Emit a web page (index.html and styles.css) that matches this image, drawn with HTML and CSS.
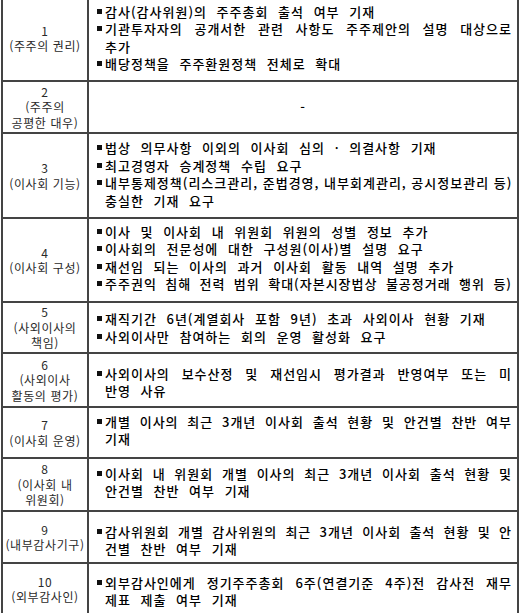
FILE: index.html
```html
<!DOCTYPE html>
<html lang="ko">
<head>
<meta charset="utf-8">
<link rel="stylesheet" href="styles.css">
</head>
<body>
<table class="grid">
  <colgroup><col class="c-label"><col class="c-body"></colgroup>
  <tr class="r1">
    <td class="label"><div>1</div><div>(주주의 권리)</div></td>
    <td class="body">
      <div class="item"><span class="dot"></span><div class="txt">감사(감사위원)의 주주총회 출석 여부 기재</div></div>
      <div class="item"><span class="dot"></span><div class="txt"><span class="jl">기관투자자의 공개서한 관련 사항도 주주제안의 설명 대상으로</span>추가</div></div>
      <div class="item"><span class="dot"></span><div class="txt">배당정책을 주주환원정책 전체로 확대</div></div>
    </td>
  </tr>
  <tr class="r2">
    <td class="label"><div>2</div><div>(주주의</div><div>공평한 대우)</div></td>
    <td class="body dash">-</td>
  </tr>
  <tr class="r3">
    <td class="label"><div>3</div><div>(이사회 기능)</div></td>
    <td class="body">
      <div class="item"><span class="dot"></span><div class="txt">법상 의무사항 이외의 이사회 심의 · 의결사항 기재</div></div>
      <div class="item"><span class="dot"></span><div class="txt">최고경영자 승계정책 수립 요구</div></div>
      <div class="item"><span class="dot"></span><div class="txt"><span class="jl">내부통제정책(리스크관리, 준법경영, 내부회계관리, 공시정보관리 등)</span>충실한 기재 요구</div></div>
    </td>
  </tr>
  <tr class="r4">
    <td class="label"><div>4</div><div>(이사회 구성)</div></td>
    <td class="body">
      <div class="item"><span class="dot"></span><div class="txt">이사 및 이사회 내 위원회 위원의 성별 정보 추가</div></div>
      <div class="item"><span class="dot"></span><div class="txt">이사회의 전문성에 대한 구성원(이사)별 설명 요구</div></div>
      <div class="item"><span class="dot"></span><div class="txt">재선임 되는 이사의 과거 이사회 활동 내역 설명 추가</div></div>
      <div class="item"><span class="dot"></span><div class="txt"><span class="jl">주주권익 침해 전력 범위 확대(자본시장법상 불공정거래 행위 등)</span></div></div>
    </td>
  </tr>
  <tr class="r5">
    <td class="label"><div>5</div><div>(사외이사의</div><div>책임)</div></td>
    <td class="body">
      <div class="item"><span class="dot"></span><div class="txt">재직기간 6년(계열회사 포함 9년) 초과 사외이사 현황 기재</div></div>
      <div class="item"><span class="dot"></span><div class="txt">사외이사만 참여하는 회의 운영 활성화 요구</div></div>
    </td>
  </tr>
  <tr class="r6">
    <td class="label"><div>6</div><div>(사외이사</div><div>활동의 평가)</div></td>
    <td class="body">
      <div class="item"><span class="dot"></span><div class="txt"><span class="jl">사외이사의 보수산정 및 재선임시 평가결과 반영여부 또는 미</span>반영 사유</div></div>
    </td>
  </tr>
  <tr class="r7">
    <td class="label"><div>7</div><div>(이사회 운영)</div></td>
    <td class="body">
      <div class="item"><span class="dot"></span><div class="txt"><span class="jl">개별 이사의 최근 3개년 이사회 출석 현황 및 안건별 찬반 여부</span>기재</div></div>
    </td>
  </tr>
  <tr class="r8">
    <td class="label"><div>8</div><div>(이사회 내</div><div>위원회)</div></td>
    <td class="body">
      <div class="item"><span class="dot"></span><div class="txt"><span class="jl">이사회 내 위원회 개별 이사의 최근 3개년 이사회 출석 현황 및</span>안건별 찬반 여부 기재</div></div>
    </td>
  </tr>
  <tr class="r9">
    <td class="label"><div>9</div><div>(내부감사기구)</div></td>
    <td class="body">
      <div class="item"><span class="dot"></span><div class="txt"><span class="jl">감사위원회 개별 감사위원의 최근 3개년 이사회 출석 현황 및 안</span>건별 찬반 여부 기재</div></div>
    </td>
  </tr>
  <tr class="r10">
    <td class="label"><div>10</div><div>(외부감사인)</div></td>
    <td class="body">
      <div class="item"><span class="dot"></span><div class="txt"><span class="jl">외부감사인에게 정기주주총회 6주(연결기준 4주)전 감사전 재무</span>제표 제출 여부 기재</div></div>
    </td>
  </tr>
</table>
</body>
</html>
```
FILE: styles.css
```css
html, body {
  margin: 0;
  padding: 0;
  background: #ffffff;
}

body {
  font-family: "Noto Sans CJK KR", "Noto Sans", sans-serif;
  color: #000;
  overflow: hidden;
}

.grid {
  border-collapse: collapse;
  table-layout: fixed;
  width: 518px;
  margin: -6px 0 0 1px;
}

.c-label { width: 86px; }

.grid td {
  border: 2px solid #444;
  padding: 0;
}

.label {
  text-align: center;
  vertical-align: middle;
  font-size: 12px;
  letter-spacing: 0.6px;
  line-height: 15.5px;
  color: #2a2a2a;
}

.body {
  vertical-align: middle;
  padding: 0 5px 5px 8px !important;
  font-size: 13px;
  font-weight: 500;
  line-height: 17.5px;
  letter-spacing: 1px;
  word-spacing: 5px;
}

.r1 .body { padding-top: 4px !important; }
.r3 .body { padding-top: 2px !important; }
.r5 .body { padding-top: 3px !important; padding-bottom: 3px !important; }
.r6 .body { padding-top: 4px !important; padding-bottom: 0 !important; }
.r9 .body { padding-top: 6px !important; padding-bottom: 0 !important; }
.r10 .body { padding-top: 4px !important; padding-bottom: 0 !important; }

.body.dash {
  text-align: center;
  padding: 0 !important;
  word-spacing: 0;
}

.item {
  display: flex;
  align-items: flex-start;
}

.dot {
  flex: 0 0 auto;
  width: 5px;
  height: 5px;
  margin: 6px 3px 0 0;
  background: #111;
}

.txt {
  flex: 1 1 auto;
  min-width: 0;
}

.jl {
  display: block;
  text-align: justify;
  text-align-last: justify;
  white-space: nowrap;
  word-spacing: 0;
}

.r1 { height: 86px; }
.r2 { height: 52px; }
.r3 { height: 85px; }
.r4 { height: 84px; }
.r5 { height: 51px; }
.r6 { height: 54px; }
.r7 { height: 51px; }
.r8 { height: 53px; }
.r9 { height: 52px; }
.r10 { height: 52px; }
```
